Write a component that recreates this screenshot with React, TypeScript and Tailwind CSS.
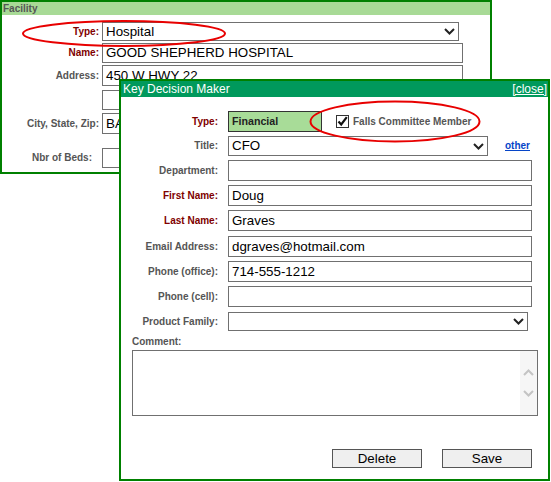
import React from "react";

const Chevron = ({ color = "#222" }: { color?: string }) => (
  <svg width="11" height="7" viewBox="0 0 11 7" className="shrink-0">
    <polyline points="1,1 5.5,5.5 10,1" fill="none" stroke={color} strokeWidth="2" />
  </svg>
);

function FLabel({ children, red, className = "" }: { children: React.ReactNode; red?: boolean; className?: string }) {
  return (
    <div
      className={`w-[97px] shrink-0 text-right text-[10px] font-bold leading-[12px] ${red ? "text-[#800000]" : "text-[#555]"} ${className}`}
    >
      {children}
    </div>
  );
}

function Box({ children, className = "" }: { children?: React.ReactNode; className?: string }) {
  return (
    <div className={`border border-[#707070] bg-white flex items-center pl-[3px] text-[13.33px] text-black leading-none whitespace-nowrap overflow-hidden ${className}`}>
      {children}
    </div>
  );
}

function SelectBox({ children, className = "" }: { children?: React.ReactNode; className?: string }) {
  return (
    <div className={`border border-[#707070] bg-white flex items-center justify-between pl-[3px] pr-[3px] text-[13.33px] text-black leading-none ${className}`}>
      <span>{children}</span>
      <Chevron />
    </div>
  );
}

function DRow({ label, red, children, className = "" }: { label: string; red?: boolean; children: React.ReactNode; className?: string }) {
  return (
    <div className={`flex items-center ${className}`}>
      <FLabel red={red}>{label}</FLabel>
      <div className="ml-[10px] flex items-center">{children}</div>
    </div>
  );
}

export default function App() {
  return (
    <div className="relative w-[551px] h-[482px] bg-white overflow-hidden font-['Liberation_Sans',Arial,sans-serif]">
      {/* Facility panel */}
      <div className="w-[492px] h-[174px] border-2 border-[#008000] bg-white">
        <div className="h-[13px] bg-[#a8da96] text-[10px] font-bold text-[#555] leading-[13px] pl-[1px]">Facility</div>
        <div className="flex flex-col pt-[7px]">
          <div className="flex items-center">
            <FLabel red>Type:</FLabel>
            <SelectBox className="ml-[3px] w-[357px] h-[19px]">Hospital</SelectBox>
          </div>
          <div className="flex items-center mt-[2px]">
            <FLabel red>Name:</FLabel>
            <Box className="ml-[3px] w-[361px] h-[20px]">GOOD SHEPHERD HOSPITAL</Box>
          </div>
          <div className="flex items-center mt-[2px]">
            <FLabel>Address:</FLabel>
            <Box className="ml-[3px] w-[361px] h-[21px]">450 W HWY 22</Box>
          </div>
          <div className="flex items-center mt-[4px]">
            <div className="w-[97px] shrink-0" />
            <Box className="ml-[3px] w-[360px] h-[20px]" />
          </div>
          <div className="flex items-center mt-[3px]">
            <FLabel>City, State, Zip:</FLabel>
            <Box className="ml-[3px] w-[180px] h-[21px]">BA</Box>
          </div>
          <div className="flex items-center mt-[14px]">
            <FLabel className="pr-[7px]">Nbr of Beds:</FLabel>
            <Box className="ml-[3px] w-[60px] h-[20px]" />
          </div>
        </div>
      </div>

      {/* Key Decision Maker dialog */}
      <div className="absolute left-[119px] top-[79px] w-[431px] h-[402px] border-2 border-[#008000] bg-white flex flex-col">
        <div className="h-[16px] bg-[#00995c] flex items-center justify-between text-[12px] text-white leading-none pl-[2px] pr-[1px]">
          <span>Key Decision Maker</span>
          <span className="underline">[close]</span>
        </div>

        <div className="flex flex-col mt-[14px]">
          <DRow label="Type:" red>
            <div className="w-[94px] h-[21px] bg-[#a8dc98] border border-[#333] flex items-center pl-[3px] text-[10.67px] font-bold text-[#222] leading-none">
              Financial
            </div>
            <div className="ml-[14px] w-[13px] h-[13px] border border-[#333] bg-white flex items-center justify-center">
              <svg width="11" height="11" viewBox="0 0 11 11">
                <polyline points="1.5,5.5 4.2,8.5 9.8,1.2" fill="none" stroke="#111" strokeWidth="2.2" />
              </svg>
            </div>
            <span className="ml-[4px] text-[10px] font-bold text-[#555] leading-none">Falls Committee Member</span>
          </DRow>
          <DRow label="Title:" className="mt-[4px]">
            <SelectBox className="w-[260px] h-[20px]">CFO</SelectBox>
            <span className="ml-[17px] text-[10px] font-bold text-[#0645c8] underline leading-none">other</span>
          </DRow>
          <DRow label="Department:" className="mt-[4px]">
            <Box className="w-[304px] h-[21px]" />
          </DRow>
          <DRow label="First Name:" red className="mt-[4px]">
            <Box className="w-[304px] h-[21px]">Doug</Box>
          </DRow>
          <DRow label="Last Name:" red className="mt-[4px]">
            <Box className="w-[304px] h-[21px]">Graves</Box>
          </DRow>
          <DRow label="Email Address:" className="mt-[5px]">
            <Box className="w-[304px] h-[21px]">dgraves@hotmail.com</Box>
          </DRow>
          <DRow label="Phone (office):" className="mt-[4px]">
            <Box className="w-[304px] h-[21px]">714-555-1212</Box>
          </DRow>
          <DRow label="Phone (cell):" className="mt-[4px]">
            <Box className="w-[304px] h-[21px]" />
          </DRow>
          <DRow label="Product Family:" className="mt-[5px]">
            <SelectBox className="w-[300px] h-[19px]" />
          </DRow>

          <div className="mt-[5px] pl-[11px] text-[10px] font-bold text-[#555] leading-[12px]">Comment:</div>
          <div className="mt-[2px] ml-[11px] w-[406px] h-[66px] border border-[#707070] bg-white flex justify-end">
            <div className="w-[17px] h-full bg-[#f6f6f6] flex flex-col items-center justify-center gap-[14px]">
              <svg width="11" height="7" viewBox="0 0 11 7">
                <polyline points="1,6 5.5,1.5 10,6" fill="none" stroke="#c4c4c4" strokeWidth="2" />
              </svg>
              <svg width="11" height="7" viewBox="0 0 11 7">
                <polyline points="1,1 5.5,5.5 10,1" fill="none" stroke="#c4c4c4" strokeWidth="2" />
              </svg>
            </div>
          </div>

          <div className="mt-[33px] flex justify-end gap-[20px] pr-[16px]">
            <div className="w-[90px] h-[19px] bg-[#efefef] border border-[#555] flex items-center justify-center text-[13.33px] text-black leading-none">
              Delete
            </div>
            <div className="w-[90px] h-[19px] bg-[#efefef] border border-[#555] flex items-center justify-center text-[13.33px] text-black leading-none">
              Save
            </div>
          </div>
        </div>
      </div>

      {/* Red highlight ellipses */}
      <svg className="absolute inset-0 pointer-events-none" width="551" height="482" viewBox="0 0 551 482">
        <ellipse cx="124" cy="33.5" rx="101" ry="12.5" fill="none" stroke="#e80000" strokeWidth="2" />
        <ellipse cx="395" cy="121.5" rx="84.5" ry="20" fill="none" stroke="#e80000" strokeWidth="2" />
      </svg>
    </div>
  );
}
